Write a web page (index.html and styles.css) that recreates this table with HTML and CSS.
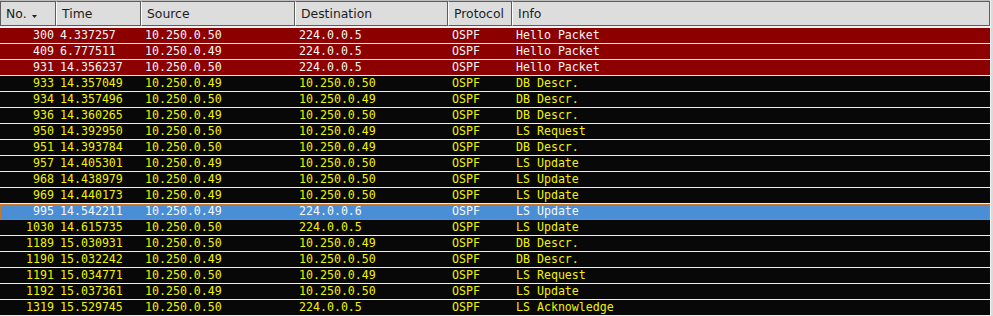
FILE: index.html
```html
<!DOCTYPE html>
<html>
<head>
<meta charset="utf-8">
<link rel="stylesheet" href="styles.css">
</head>
<body>
<div class="list">
  <div class="hdr">
    <div class="h c-no">No.<svg class="sort" width="5" height="3" viewBox="0 0 5 3"><polygon points="0,0 5,0 2.5,3" fill="#222"/></svg></div>
    <div class="h c-time">Time</div>
    <div class="h c-src">Source</div>
    <div class="h c-dst">Destination</div>
    <div class="h c-proto">Protocol</div>
    <div class="h c-info">Info</div>
  </div>
  <div class="rows">
    <div class="row red"><span class="c-no">300</span><span class="c-time">4.337257</span><span class="c-src">10.250.0.50</span><span class="c-dst">224.0.0.5</span><span class="c-proto">OSPF</span><span class="c-info">Hello Packet</span></div>
    <div class="row red"><span class="c-no">409</span><span class="c-time">6.777511</span><span class="c-src">10.250.0.49</span><span class="c-dst">224.0.0.5</span><span class="c-proto">OSPF</span><span class="c-info">Hello Packet</span></div>
    <div class="row red"><span class="c-no">931</span><span class="c-time">14.356237</span><span class="c-src">10.250.0.50</span><span class="c-dst">224.0.0.5</span><span class="c-proto">OSPF</span><span class="c-info">Hello Packet</span></div>
    <div class="row blk"><span class="c-no">933</span><span class="c-time">14.357049</span><span class="c-src">10.250.0.49</span><span class="c-dst">10.250.0.50</span><span class="c-proto">OSPF</span><span class="c-info">DB Descr.</span></div>
    <div class="row blk"><span class="c-no">934</span><span class="c-time">14.357496</span><span class="c-src">10.250.0.50</span><span class="c-dst">10.250.0.49</span><span class="c-proto">OSPF</span><span class="c-info">DB Descr.</span></div>
    <div class="row blk"><span class="c-no">936</span><span class="c-time">14.360265</span><span class="c-src">10.250.0.49</span><span class="c-dst">10.250.0.50</span><span class="c-proto">OSPF</span><span class="c-info">DB Descr.</span></div>
    <div class="row blk"><span class="c-no">950</span><span class="c-time">14.392950</span><span class="c-src">10.250.0.50</span><span class="c-dst">10.250.0.49</span><span class="c-proto">OSPF</span><span class="c-info">LS Request</span></div>
    <div class="row blk"><span class="c-no">951</span><span class="c-time">14.393784</span><span class="c-src">10.250.0.50</span><span class="c-dst">10.250.0.49</span><span class="c-proto">OSPF</span><span class="c-info">DB Descr.</span></div>
    <div class="row blk"><span class="c-no">957</span><span class="c-time">14.405301</span><span class="c-src">10.250.0.49</span><span class="c-dst">10.250.0.50</span><span class="c-proto">OSPF</span><span class="c-info">LS Update</span></div>
    <div class="row blk"><span class="c-no">968</span><span class="c-time">14.438979</span><span class="c-src">10.250.0.49</span><span class="c-dst">10.250.0.50</span><span class="c-proto">OSPF</span><span class="c-info">LS Update</span></div>
    <div class="row blk"><span class="c-no">969</span><span class="c-time">14.440173</span><span class="c-src">10.250.0.49</span><span class="c-dst">10.250.0.50</span><span class="c-proto">OSPF</span><span class="c-info">LS Update</span></div>
    <div class="row sel"><span class="c-no">995</span><span class="c-time">14.542211</span><span class="c-src">10.250.0.49</span><span class="c-dst">224.0.0.6</span><span class="c-proto">OSPF</span><span class="c-info">LS Update</span></div>
    <div class="row blk"><span class="c-no">1030</span><span class="c-time">14.615735</span><span class="c-src">10.250.0.50</span><span class="c-dst">224.0.0.5</span><span class="c-proto">OSPF</span><span class="c-info">LS Update</span></div>
    <div class="row blk"><span class="c-no">1189</span><span class="c-time">15.030931</span><span class="c-src">10.250.0.50</span><span class="c-dst">10.250.0.49</span><span class="c-proto">OSPF</span><span class="c-info">DB Descr.</span></div>
    <div class="row blk"><span class="c-no">1190</span><span class="c-time">15.032242</span><span class="c-src">10.250.0.49</span><span class="c-dst">10.250.0.50</span><span class="c-proto">OSPF</span><span class="c-info">DB Descr.</span></div>
    <div class="row blk"><span class="c-no">1191</span><span class="c-time">15.034771</span><span class="c-src">10.250.0.50</span><span class="c-dst">10.250.0.49</span><span class="c-proto">OSPF</span><span class="c-info">LS Request</span></div>
    <div class="row blk"><span class="c-no">1192</span><span class="c-time">15.037361</span><span class="c-src">10.250.0.49</span><span class="c-dst">10.250.0.50</span><span class="c-proto">OSPF</span><span class="c-info">LS Update</span></div>
    <div class="row blk"><span class="c-no">1319</span><span class="c-time">15.529745</span><span class="c-src">10.250.0.50</span><span class="c-dst">224.0.0.5</span><span class="c-proto">OSPF</span><span class="c-info">LS Acknowledge</span></div>
  </div>
</div>
</body>
</html>
```
FILE: styles.css
```css
html, body {
  margin: 0;
  padding: 0;
  background: #dadada;
}
body {
  width: 993px;
  height: 316px;
  overflow: hidden;
}
.list {
  width: 990px;
  border-right: 1px solid #f4f4f4;
}
.hdr {
  display: flex;
  padding-top: 1px;
  background: #bdbdbd;
  border-bottom: 2px solid #f2f2f2;
}
.h {
  box-sizing: border-box;
  height: 25px;
  background: #dddddd;
  border: 1px solid #5c5c5c;
  border-left-color: #ffffff;
  padding-left: 5px;
  font-family: "DejaVu Sans", sans-serif;
  font-size: 12.4px;
  line-height: 23px;
  color: #1c1c1c;
  white-space: nowrap;
  display: flex;
  align-items: center;
}
.h.c-no {
  border-left-color: #5c5c5c;
}
.sort {
  margin-left: 5px;
  margin-top: 6px;
}
.c-no { width: 56px; flex: none; box-sizing: border-box; }
.c-time { width: 85px; flex: none; box-sizing: border-box; }
.c-src { width: 154px; flex: none; box-sizing: border-box; }
.c-dst { width: 153px; flex: none; box-sizing: border-box; }
.c-proto { width: 64px; flex: none; box-sizing: border-box; }
.c-info { flex: 1; box-sizing: border-box; }
.row {
  display: flex;
  height: 15px;
  border-bottom: 1px solid #efefef;
  font-family: "DejaVu Sans Mono", monospace;
  font-size: 11.6px;
  line-height: 15px;
  white-space: nowrap;
}
.row span {
  padding-left: 4px;
}
.row span.c-no {
  padding-left: 0;
  padding-right: 2px;
  text-align: right;
}
.red {
  background: #8c0000;
  color: #f6f6f6;
}
.blk {
  background: #080808;
  color: #f2f200;
}
.sel {
  background: #4a8ed6;
  color: #f8f8f8;
  border-bottom-color: #c7782f;
  box-shadow: inset 0 1px 0 #c7782f, inset 1px 0 0 #c7782f, inset -1px 0 0 #c7782f;
}
```
